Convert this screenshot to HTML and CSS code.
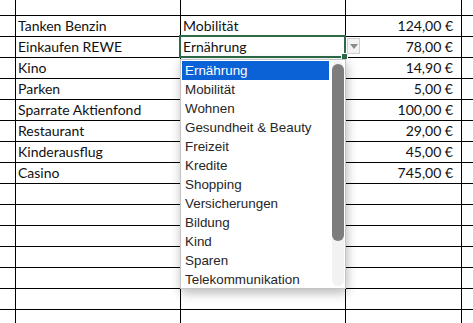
FILE: index.html
```html
<!DOCTYPE html>
<html lang="de">
<head>
<meta charset="utf-8">
<title>Ausgaben</title>
<link rel="stylesheet" href="styles.css">
</head>
<body>
<div class="sheet">
  <div class="grid">
    <div class="c c0 r0"></div><div class="c c1 r0"></div><div class="c c2 r0"></div><div class="c c3 r0 num"></div><div class="c c4 r0"></div>

    <div class="c c0"></div><div class="c c1">Tanken Benzin</div><div class="c c2">Mobilität</div><div class="c c3 num">124,00 €</div><div class="c c4"></div>
    <div class="c c0"></div><div class="c c1">Einkaufen REWE</div><div class="c c2">Ernährung</div><div class="c c3 num">78,00 €</div><div class="c c4"></div>
    <div class="c c0"></div><div class="c c1">Kino</div><div class="c c2"></div><div class="c c3 num">14,90 €</div><div class="c c4"></div>
    <div class="c c0"></div><div class="c c1">Parken</div><div class="c c2"></div><div class="c c3 num">5,00 €</div><div class="c c4"></div>
    <div class="c c0"></div><div class="c c1">Sparrate Aktienfond</div><div class="c c2"></div><div class="c c3 num">100,00 €</div><div class="c c4"></div>
    <div class="c c0"></div><div class="c c1">Restaurant</div><div class="c c2"></div><div class="c c3 num">29,00 €</div><div class="c c4"></div>
    <div class="c c0"></div><div class="c c1">Kinderausflug</div><div class="c c2"></div><div class="c c3 num">45,00 €</div><div class="c c4"></div>
    <div class="c c0"></div><div class="c c1">Casino</div><div class="c c2"></div><div class="c c3 num">745,00 €</div><div class="c c4"></div>
    <div class="c c0"></div><div class="c c1"></div><div class="c c2"></div><div class="c c3"></div><div class="c c4"></div>
    <div class="c c0"></div><div class="c c1"></div><div class="c c2"></div><div class="c c3"></div><div class="c c4"></div>
    <div class="c c0"></div><div class="c c1"></div><div class="c c2"></div><div class="c c3"></div><div class="c c4"></div>
    <div class="c c0"></div><div class="c c1"></div><div class="c c2"></div><div class="c c3"></div><div class="c c4"></div>
    <div class="c c0"></div><div class="c c1"></div><div class="c c2"></div><div class="c c3"></div><div class="c c4"></div>
    <div class="c c0"></div><div class="c c1"></div><div class="c c2"></div><div class="c c3"></div><div class="c c4"></div>
    <div class="c c0"></div><div class="c c1"></div><div class="c c2"></div><div class="c c3"></div><div class="c c4"></div>
  </div>

  <div class="selection"></div>
  <div class="handle"></div>
  <div class="ddbtn"><span class="tri"></span></div>

  <div class="dropdown">
    <ul class="items">
      <li class="item active">Ernährung</li>
      <li class="item">Mobilität</li>
      <li class="item">Wohnen</li>
      <li class="item">Gesundheit &amp; Beauty</li>
      <li class="item">Freizeit</li>
      <li class="item">Kredite</li>
      <li class="item">Shopping</li>
      <li class="item">Versicherungen</li>
      <li class="item">Bildung</li>
      <li class="item">Kind</li>
      <li class="item">Sparen</li>
      <li class="item">Telekommunikation</li>
    </ul>
    <div class="scrolltrack"><div class="thumb"></div></div>
  </div>
</div>
</body>
</html>
```
FILE: styles.css
```css
html, body {
  margin: 0;
  padding: 0;
  background: #fff;
  overflow: hidden;
}
.sheet {
  position: relative;
  width: 473px;
  height: 323px;
  overflow: hidden;
}
.grid {
  display: grid;
  grid-template-columns: 16px 165px 165px 116px 40px;
  grid-auto-rows: 21px;
  font-family: Lato, "Liberation Sans", sans-serif;
  font-size: 14px;
  color: #111;
}
.c {
  box-sizing: border-box;
  border-right: 1px solid #000;
  border-bottom: 1px solid #000;
  padding: 0 3px;
  line-height: 20px;
  white-space: nowrap;
  overflow: hidden;
}
.c.r0 { height: 16px; }
.grid > .c.r0 { align-self: start; }
.c4 { border-right: none; }
.c1 { padding-left: 2px; }
.c2 { padding-left: 2px; }
.num { text-align: right; padding-right: 8px; }

.grid { grid-template-rows: 16px; }

.selection {
  position: absolute;
  left: 179px;
  top: 35px;
  width: 167px;
  height: 23px;
  box-sizing: border-box;
  border: 2px solid #2d6a47;
}
.handle {
  position: absolute;
  left: 342px;
  top: 54px;
  width: 5px;
  height: 5px;
  background: #2d6a47;
  outline: 1px solid #fff;
}
.ddbtn {
  position: absolute;
  left: 347px;
  top: 38px;
  width: 13px;
  height: 16px;
  box-sizing: border-box;
  background: #f3f3f3;
  border: 1px solid #cfcfcf;
  display: flex;
  align-items: center;
  justify-content: center;
}
.tri {
  width: 0;
  height: 0;
  border-left: 4px solid transparent;
  border-right: 4px solid transparent;
  border-top: 5px solid #8a8a8a;
}

.dropdown {
  position: absolute;
  left: 180px;
  top: 59px;
  width: 166px;
  height: 230px;
  box-sizing: border-box;
  background: #fff;
  border: 1px solid #c4c4c4;
  box-shadow: 1px 4px 10px rgba(0,0,0,0.28);
  display: flex;
  font-family: "Liberation Sans", Arial, sans-serif;
  font-size: 13.4px;
  color: #262626;
}
.items {
  list-style: none;
  margin: 0;
  padding: 1px 0 0 1px;
  width: 147px;
}
.item {
  height: 19px;
  line-height: 19px;
  padding-left: 3px;
  white-space: nowrap;
}
.item.active {
  background: #0b62d7;
  color: #fff;
}
.scrolltrack {
  margin: 1px 0 2px 3px;
  width: 12px;
  background: #f2f2f2;
  border-radius: 6px;
  flex: none;
}
.thumb {
  margin-top: 3px;
  height: 177px;
  width: 12px;
  background: #7d7d7d;
  border-radius: 6px;
}
```
